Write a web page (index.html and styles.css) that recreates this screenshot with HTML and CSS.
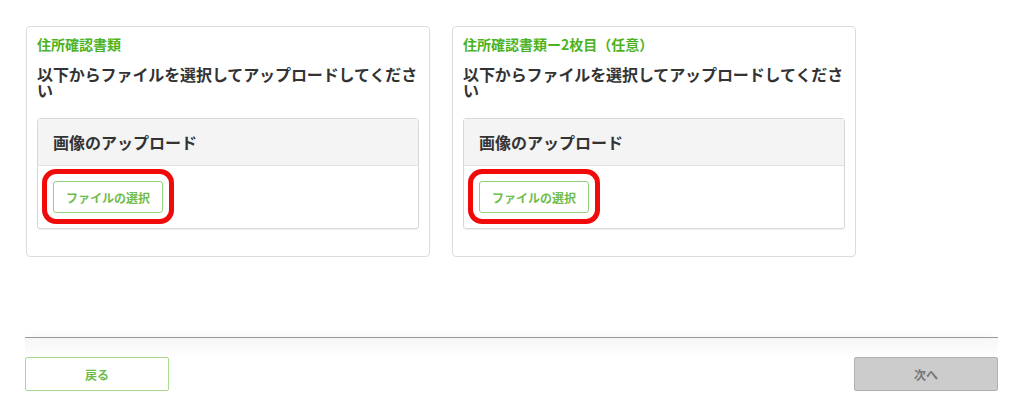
FILE: index.html
```html
<!DOCTYPE html>
<html lang="ja">
<head>
    <meta charset="UTF-8">
    <meta name="viewport" content="width=device-width, initial-scale=1.0">
    <title>住所確認書類のアップロード</title>
    <link rel="stylesheet" href="styles.css">
</head>
<body>
    <div class="page">
        <main class="cards">
            <section class="card">
                <h3 class="card-title">住所確認書類</h3>
                <p class="card-lead">以下からファイルを選択してアップロードしてください</p>
                <div class="upload">
                    <div class="upload-head">画像のアップロード</div>
                    <div class="upload-body">
                        <button type="button" class="file-btn">ファイルの選択</button>
                    </div>
                </div>
            </section>

            <section class="card">
                <h3 class="card-title">住所確認書類ー2枚目（任意）</h3>
                <p class="card-lead">以下からファイルを選択してアップロードしてください</p>
                <div class="upload">
                    <div class="upload-head">画像のアップロード</div>
                    <div class="upload-body">
                        <button type="button" class="file-btn">ファイルの選択</button>
                    </div>
                </div>
            </section>
        </main>

        <footer class="actions">
            <button type="button" class="btn btn-back">戻る</button>
            <button type="button" class="btn btn-next" disabled>次へ</button>
        </footer>
    </div>
</body>
</html>
```

FILE: styles.css
```css
body {
    margin: 0;
    padding: 0;
    background: #fff;
    color: #333;
    font-family: "Noto Sans CJK JP", "Noto Sans", sans-serif;
}

.page {
    padding: 26px 26px 0 25px;
}

.cards {
    display: flex;
    gap: 22px;
    padding-left: 1px;
}

.card {
    width: 404px;
    height: 231px;
    box-sizing: border-box;
    border: 1px solid #dcdcdc;
    border-radius: 4px;
    padding: 10px;
}

.card-title {
    margin: 0;
    font-size: 14px;
    line-height: 14px;
    font-weight: bold;
    color: #4cb31e;
}

.card-lead {
    margin: 15px 0 0;
    font-size: 16px;
    line-height: 16px;
    letter-spacing: -0.1px;
    font-weight: bold;
    color: #333;
}

.upload {
    margin-top: 20px;
    border: 1px solid #d8d8d8;
    border-radius: 3px;
    box-shadow: 0 1px 1px rgba(0, 0, 0, 0.06);
}

.upload-head {
    height: 47px;
    box-sizing: border-box;
    padding: 0 15px;
    display: flex;
    align-items: center;
    background: #f4f4f4;
    border-bottom: 1px solid #e2e2e2;
    font-size: 16px;
    font-weight: bold;
    color: #333;
}

.upload-body {
    padding: 15px 15px 15px;
}

/* ボタンを囲む赤い注記 */
.file-btn {
    position: relative;
    width: 110px;
    height: 32px;
    padding: 0;
    background: #fff;
    border: 1px solid #93d27c;
    border-radius: 3px;
    font-family: inherit;
    font-size: 12px;
    font-weight: bold;
    color: #6fbd4d;
    cursor: pointer;
}

.file-btn::after {
    content: "";
    position: absolute;
    left: -12px;
    top: -13px;
    right: -12px;
    bottom: -12px;
    border: 5px solid #f00a0a;
    border-radius: 14px;
    pointer-events: none;
}

.actions {
    margin-top: 80px;
    padding-top: 19px;
    display: flex;
    justify-content: space-between;
    border-top: 1px solid #9a9a9a;
    background: linear-gradient(#f6f6f6, #fff 20px);
    box-shadow: 0 -8px 8px -6px rgba(0, 0, 0, 0.04);
}

.btn {
    width: 144px;
    height: 34px;
    padding: 0;
    border-radius: 2px;
    font-family: inherit;
    font-size: 12px;
    font-weight: bold;
}

.btn-back {
    background: #fff;
    border: 1px solid #a6da8e;
    color: #6dbb49;
    cursor: pointer;
}

.btn-next {
    background: #cccccc;
    border: 1px solid #b0b0b0;
    color: #777;
}
```
